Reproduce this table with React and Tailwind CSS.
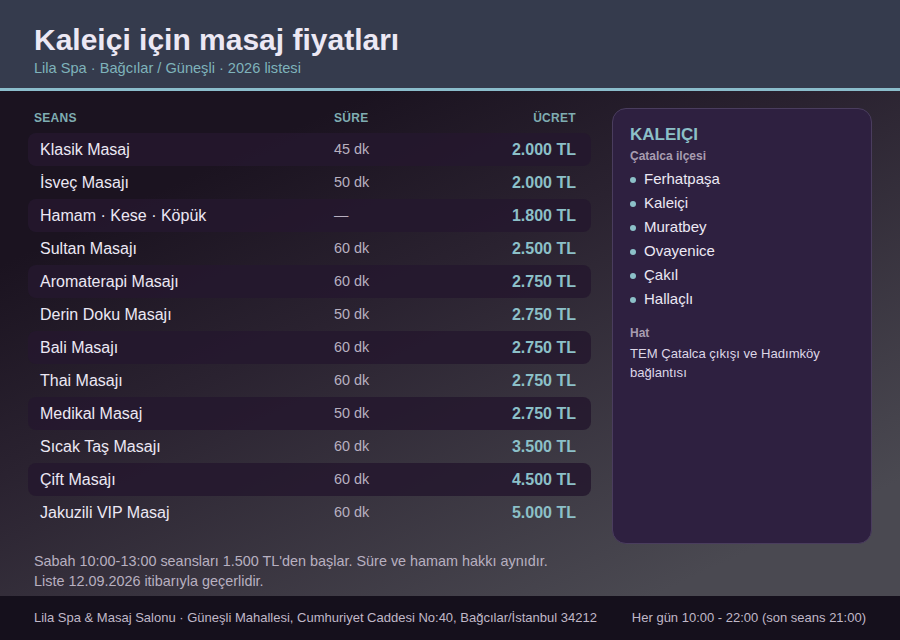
const rows = [
  ["Klasik Masaj", "45 dk", "2.000 TL"],
  ["İsveç Masajı", "50 dk", "2.000 TL"],
  ["Hamam · Kese · Köpük", "—", "1.800 TL"],
  ["Sultan Masajı", "60 dk", "2.500 TL"],
  ["Aromaterapi Masajı", "60 dk", "2.750 TL"],
  ["Derin Doku Masajı", "50 dk", "2.750 TL"],
  ["Bali Masajı", "60 dk", "2.750 TL"],
  ["Thai Masajı", "60 dk", "2.750 TL"],
  ["Medikal Masaj", "50 dk", "2.750 TL"],
  ["Sıcak Taş Masajı", "60 dk", "3.500 TL"],
  ["Çift Masajı", "60 dk", "4.500 TL"],
  ["Jakuzili VIP Masaj", "60 dk", "5.000 TL"],
];

const areas = ["Ferhatpaşa", "Kaleiçi", "Muratbey", "Ovayenice", "Çakıl", "Hallaçlı"];

export default function App() {
  return (
    <div className="w-[900px] h-[640px] flex flex-col overflow-hidden font-['Liberation_Sans',Arial,sans-serif] bg-[linear-gradient(155deg,#1b1320_25%,#2a2230_45%,#4a4951_85%)]">
      <header className="h-[91px] shrink-0 bg-[#353b4d] border-b-[3px] border-[#8bbdcc] px-[34px] pt-[22px]">
        <h1 className="text-[30px] leading-[36px] font-bold text-[#ece8f4]">Kaleiçi için masaj fiyatları</h1>
        <p className="text-[14.6px] leading-[18px] mt-[1px] text-[#7fb3bb]">Lila Spa · Bağcılar / Güneşli · 2026 listesi</p>
      </header>

      <main className="flex-1 flex gap-[21px] px-[28px] pt-[17px]">
        <div className="w-[563px] shrink-0">
          <div className="flex items-center h-[20px] px-[6px] text-[12px] font-bold uppercase text-[#7fadb2] tracking-[0.3px]">
            <span className="w-[300px]">Seans</span>
            <span className="flex-1">Süre</span>
            <span className="pr-[9px]">Ücret</span>
          </div>
          <div className="mt-[5px] flex flex-col">
            {rows.map(([name, dur, price], i) => (
              <div
                key={name}
                className={`flex items-center h-[33px] pl-[12px] pr-[15px] rounded-[8px] ${i % 2 === 0 ? "bg-[#24182e]/85" : ""}`}
              >
                <span className="w-[294px] text-[16px] text-[#ece8f4]">{name}</span>
                <span className="flex-1 text-[14.4px] text-[#b8b0c0]">{dur}</span>
                <span className="text-[16px] font-bold text-[#8cc0c8]">{price}</span>
              </div>
            ))}
          </div>
        </div>

        <aside className="w-[261px] h-[436px] rounded-[14px] bg-[#2e2040] border border-[#4a3d5e] px-[17px] pt-[16px]">
          <h2 className="text-[17px] leading-[20px] font-bold text-[#8cc0c8]">KALEIÇI</h2>
          <p className="text-[12px] leading-[16px] mt-[3px] font-bold text-[#a89cb0]">Çatalca ilçesi</p>
          <ul className="mt-[3px] flex flex-col">
            {areas.map((a) => (
              <li key={a} className="flex items-center h-[24px] text-[15px] text-[#ece8f4]">
                <span className="w-[6px] h-[6px] rounded-full bg-[#8cc0c8] mr-[8px] mt-[2px]"></span>
                {a}
              </li>
            ))}
          </ul>
          <p className="mt-[13px] text-[12px] font-bold text-[#a89cb0]">Hat</p>
          <p className="mt-[2px] text-[13.1px] leading-[19px] text-[#ddd6e6]">TEM Çatalca çıkışı ve Hadımköy bağlantısı</p>
        </aside>
      </main>

      <div className="px-[34px] pb-[5px] text-[14.4px] leading-[20px] text-[#b8b0c0]">
        <p>Sabah 10:00-13:00 seansları 1.500 TL'den başlar. Süre ve hamam hakkı aynıdır.</p>
        <p>Liste 12.09.2026 itibarıyla geçerlidir.</p>
      </div>

      <footer className="h-[44px] shrink-0 bg-[#15101c] flex items-center justify-between px-[34px] text-[13px] text-[#c0b8c8]">
        <span>Lila Spa &amp; Masaj Salonu · Güneşli Mahallesi, Cumhuriyet Caddesi No:40, Bağcılar/İstanbul 34212</span>
        <span>Her gün 10:00 - 22:00 (son seans 21:00)</span>
      </footer>
    </div>
  );
}
